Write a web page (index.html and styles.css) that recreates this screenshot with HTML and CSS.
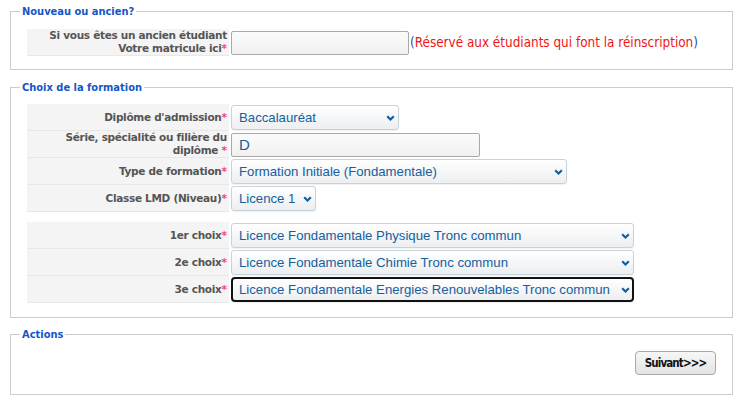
FILE: index.html
```html
<!DOCTYPE html>
<html lang="fr">
<head>
<meta charset="utf-8">
<title>Inscription</title>
<link rel="stylesheet" href="styles.css">
</head>
<body>
<form class="page">
  <fieldset class="box box-first">
    <legend class="legend">Nouveau ou ancien?</legend>
    <div class="rows">
      <div class="row row-tall">
        <div class="lbl"><span class="lbl-text">Si vous êtes un ancien étudiant<br>Votre matricule ici<span class="req">*</span></span></div>
        <div class="fld">
          <input class="txt w-mat" type="text">
          <span class="note">(<span class="note-red">Réservé aux étudiants qui font la réinscription</span>)</span>
        </div>
      </div>
    </div>
  </fieldset>

  <fieldset class="box box-form">
    <legend class="legend">Choix de la formation</legend>
    <div class="rows">
      <div class="row">
        <div class="lbl"><span class="lbl-text">Diplôme d'admission<span class="req">*</span></span></div>
        <div class="fld">
          <span class="sel w-dip"><select><option>Baccalauréat</option></select><svg class="chev" viewBox="0 0 9 6"><path d="M1.2 1.2 L4.5 4.5 L7.8 1.2" fill="none" stroke="currentColor" stroke-width="2.2"/></svg></span>
        </div>
      </div>
      <div class="row">
        <div class="lbl"><span class="lbl-text">Série, spécialité ou filière du<br>diplôme <span class="req">*</span></span></div>
        <div class="fld">
          <input class="txt w-serie" type="text" value="D">
        </div>
      </div>
      <div class="row">
        <div class="lbl"><span class="lbl-text">Type de formation<span class="req">*</span></span></div>
        <div class="fld">
          <span class="sel w-type"><select><option>Formation Initiale (Fondamentale)</option></select><svg class="chev" viewBox="0 0 9 6"><path d="M1.2 1.2 L4.5 4.5 L7.8 1.2" fill="none" stroke="currentColor" stroke-width="2.2"/></svg></span>
        </div>
      </div>
      <div class="row">
        <div class="lbl"><span class="lbl-text">Classe LMD (Niveau)<span class="req">*</span></span></div>
        <div class="fld">
          <span class="sel w-lmd"><select><option>Licence 1</option></select><svg class="chev" viewBox="0 0 9 6"><path d="M1.2 1.2 L4.5 4.5 L7.8 1.2" fill="none" stroke="currentColor" stroke-width="2.2"/></svg></span>
        </div>
      </div>
    </div>
    <div class="rows rows-choix">
      <div class="row">
        <div class="lbl"><span class="lbl-text">1er choix<span class="req">*</span></span></div>
        <div class="fld">
          <span class="sel w-choix"><select><option>Licence Fondamentale Physique Tronc commun</option></select><svg class="chev" viewBox="0 0 9 6"><path d="M1.2 1.2 L4.5 4.5 L7.8 1.2" fill="none" stroke="currentColor" stroke-width="2.2"/></svg></span>
        </div>
      </div>
      <div class="row">
        <div class="lbl"><span class="lbl-text">2e choix<span class="req">*</span></span></div>
        <div class="fld">
          <span class="sel w-choix"><select><option>Licence Fondamentale Chimie Tronc commun</option></select><svg class="chev" viewBox="0 0 9 6"><path d="M1.2 1.2 L4.5 4.5 L7.8 1.2" fill="none" stroke="currentColor" stroke-width="2.2"/></svg></span>
        </div>
      </div>
      <div class="row">
        <div class="lbl"><span class="lbl-text">3e choix<span class="req">*</span></span></div>
        <div class="fld">
          <span class="sel w-choix sel-focus"><select><option>Licence Fondamentale Energies Renouvelables Tronc commun</option></select><svg class="chev" viewBox="0 0 9 6"><path d="M1.2 1.2 L4.5 4.5 L7.8 1.2" fill="none" stroke="currentColor" stroke-width="2.2"/></svg></span>
        </div>
      </div>
    </div>
  </fieldset>

  <fieldset class="box box-actions">
    <legend class="legend">Actions</legend>
    <div class="actions">
      <button class="btn" type="button">Suivant&gt;&gt;&gt;</button>
    </div>
  </fieldset>
</form>
</body>
</html>
```

FILE: styles.css
```css
* { box-sizing: border-box; }

html, body {
  margin: 0;
  padding: 0;
  background: #ffffff;
}

.page {
  margin: 0;
  padding: 5px 14px 0 10px;
  font-family: "DejaVu Sans", Verdana, sans-serif;
}

.box {
  margin: 0 0 10px 0;
  border: 1px solid #cccccc;
  padding: 11px 15px 13px 16px;
  min-width: 0;
}

.box-form {
  margin-top: 11px;
  padding-top: 10px;
  padding-bottom: 14px;
}

.box-actions {
  margin-top: 9px;
  padding: 10px 16px 19px 16px;
}

.legend {
  margin-left: -7px;
  padding: 0 2px;
  font-family: "DejaVu Sans Condensed", "DejaVu Sans", sans-serif;
  font-weight: bold;
  font-size: 11px;
  line-height: 13px;
  color: #1456c8;
}

.rows {
  display: flex;
  flex-direction: column;
}

.rows-choix {
  margin-top: 10px;
}

.row {
  display: flex;
  align-items: stretch;
  height: 27px;
}

.lbl {
  width: 202px;
  flex: none;
  background: #f4f4f4;
  border-bottom: 1px solid #e8e8e8;
  display: flex;
  align-items: center;
  justify-content: flex-end;
  padding-right: 2px;
}

.lbl-text {
  display: block;
  text-align: right;
  font-family: "DejaVu Sans", Verdana, sans-serif;
  font-weight: bold;
  font-size: 10.5px;
  letter-spacing: -0.3px;
  line-height: 13px;
  color: #555555;
}

.req {
  color: #f0457a;
  letter-spacing: 0;
}

.fld {
  flex: 1;
  display: flex;
  align-items: center;
  padding-left: 2px;
}

.txt {
  height: 24px;
  margin: 0;
  border: 1px solid #a9a9a9;
  border-radius: 2px;
  background: linear-gradient(#fbfbfb, #f1f1f1);
  padding: 0 7px;
  font-family: "Liberation Sans", Arial, sans-serif;
  font-size: 15px;
  color: #14609f;
  outline: none;
}

.w-mat { width: 178px; }
.w-serie { width: 249px; }

.note {
  margin-left: 1px;
  font-family: "DejaVu Sans Condensed", "DejaVu Sans", sans-serif;
  font-size: 13.4px;
  color: #1a4fa8;
}

.note-red {
  color: #f01414;
}

.sel {
  position: relative;
  display: inline-flex;
  height: 25px;
  color: #14609f;
}

.sel select {
  appearance: none;
  -webkit-appearance: none;
  width: 100%;
  height: 100%;
  margin: 0;
  border: 1px solid #c5d3dd;
  border-radius: 3px;
  background: linear-gradient(#ffffff, #eceef0);
  box-shadow: 0 1px 1px rgba(0, 0, 0, 0.06);
  padding: 0 10px 0 7px;
  font-family: "Liberation Sans", Arial, sans-serif;
  font-size: 13.2px;
  color: #14609f;
  outline: none;
}

.sel-focus select {
  border: 2px solid #111111;
  border-radius: 4px;
  padding-left: 6px;
}

.chev {
  position: absolute;
  right: 4px;
  top: 10px;
  width: 9px;
  height: 6px;
  pointer-events: none;
}

.w-dip { width: 168px; }
.w-type { width: 336px; }
.w-lmd { width: 85px; }
.w-choix { width: 403px; }

.actions {
  display: flex;
  justify-content: flex-end;
}

.btn {
  width: 81px;
  height: 24px;
  margin: 0;
  border: 1px solid #a8a8a8;
  border-radius: 4px;
  background: linear-gradient(#f7f7f7, #e3e3e3);
  font-family: "DejaVu Sans Condensed", "DejaVu Sans", sans-serif;
  font-weight: bold;
  font-size: 11.5px;
  letter-spacing: -0.9px;
  color: #111111;
  padding: 0;
}
```
